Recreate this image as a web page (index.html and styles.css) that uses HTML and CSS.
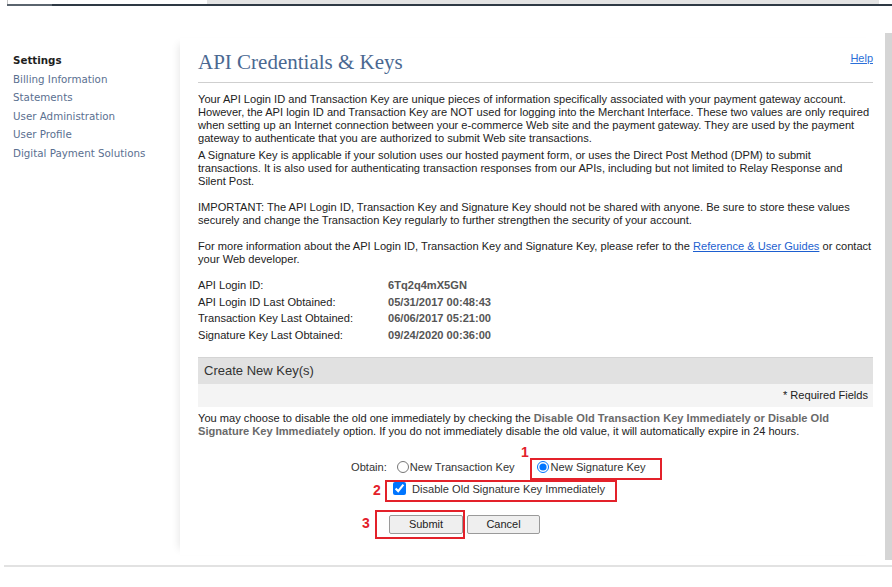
FILE: index.html
```html
<!DOCTYPE html>
<html lang="en">
<head>
<meta charset="utf-8">
<title>API Credentials &amp; Keys</title>
<link rel="stylesheet" href="styles.css">
</head>
<body>
<div class="topbar">
  <div class="topbar-top"><div class="tb-white"></div><div class="tb-grey"></div></div>
  <div class="topbar-line"></div>
</div>
<div class="layout">
  <nav class="sidebar">
    <div class="side-title">Settings</div>
    <a class="side-link" href="#">Billing Information</a>
    <a class="side-link" href="#">Statements</a>
    <a class="side-link" href="#">User Administration</a>
    <a class="side-link" href="#">User Profile</a>
    <a class="side-link" href="#">Digital Payment Solutions</a>
  </nav>
  <main class="panel">
    <div class="head">
      <h1 class="title">API Credentials &amp; Keys</h1>
      <a class="help" href="#">Help</a>
    </div>
    <p class="p1">Your API Login ID and Transaction Key are unique pieces of information specifically associated with your payment gateway account. However, the API login ID and Transaction Key are NOT used for logging into the Merchant Interface. These two values are only required when setting up an Internet connection between your e-commerce Web site and the payment gateway. They are used by the payment gateway to authenticate that you are authorized to submit Web site transactions.</p>
    <p class="p2">A Signature Key is applicable if your solution uses our hosted payment form, or uses the Direct Post Method (DPM) to submit transactions. It is also used for authenticating transaction responses from our APIs, including but not limited to Relay Response and Silent Post.</p>
    <p class="p3">IMPORTANT: The API Login ID, Transaction Key and Signature Key should not be shared with anyone. Be sure to store these values securely and change the Transaction Key regularly to further strengthen the security of your account.</p>
    <p class="p3">For more information about the API Login ID, Transaction Key and Signature Key, please refer to the <a class="link" href="#">Reference &amp; User Guides</a> or contact your Web developer.</p>
    <div class="keys">
      <div class="k">API Login ID:</div><div class="v">6Tq2q4mX5GN</div>
      <div class="k">API Login ID Last Obtained:</div><div class="v">05/31/2017 00:48:43</div>
      <div class="k">Transaction Key Last Obtained:</div><div class="v">06/06/2017 05:21:00</div>
      <div class="k">Signature Key Last Obtained:</div><div class="v">09/24/2020 00:36:00</div>
    </div>
    <div class="create-bar">Create New Key(s)</div>
    <div class="required">* Required Fields</div>
    <p class="p4">You may choose to disable the old one immediately by checking the <span class="em">Disable Old Transaction Key Immediately or Disable Old Signature Key Immediately</span> option. If you do not immediately disable the old value, it will automatically expire in 24 hours.</p>
    <form class="form">
      <div class="obtain-row">
        <span class="obtain-label">Obtain:</span>
        <label class="opt opt1"><input type="radio" name="k">New Transaction Key</label>
        <label class="opt opt2"><input type="radio" name="k" checked>New Signature Key</label>
      </div>
      <div class="check-row">
        <label class="opt"><input type="checkbox" checked>Disable Old Signature Key Immediately</label>
      </div>
      <div class="btn-row">
        <button type="button" class="btn btn-submit">Submit</button>
        <button type="button" class="btn btn-cancel">Cancel</button>
      </div>
      <div class="mark box1"></div>
      <div class="num n1">1</div>
      <div class="mark box2"></div>
      <div class="num n2">2</div>
      <div class="mark box3"></div>
      <div class="num n3">3</div>
    </form>
  </main>
  <div class="scroll"></div>
</div>
<div class="footer-line"></div>
</body>
</html>
```

FILE: styles.css
```css
html, body {
  margin: 0;
  padding: 0;
  background: #fff;
}
body {
  width: 892px;
  height: 587px;
  overflow: hidden;
  font-family: "Liberation Sans", Arial, sans-serif;
  font-size: 11.1px;
  color: #222;
}

/* top bar */
.topbar {
  display: flex;
  flex-direction: column;
  height: 6px;
}
.topbar-top {
  display: flex;
  height: 4px;
  margin-left: 7px;
  border-left: 1px solid #c4c4c4;
}
.tb-white { width: 199px; }
.tb-grey { width: 672px; background: #e3e3e3; }
.topbar-line {
  height: 2px;
  margin-left: 7px;
  background: linear-gradient(to right, #5a646e 0, #5a646e 45px, #2e3944 45px);
}

/* layout */
.layout {
  display: flex;
  margin-top: 27px;
  height: 527px;
}
.sidebar {
  width: 180px;
  flex: none;
  box-sizing: border-box;
  padding: 18px 0 0 13px;
  display: flex;
  flex-direction: column;
  font-family: "DejaVu Sans", Verdana, sans-serif;
  font-size: 10.3px;
  line-height: 18.5px;
}
.side-title {
  font-weight: bold;
  color: #1e1e1e;
}
.side-link {
  color: #5a6f90;
  text-decoration: none;
}

.panel {
  width: 700px;
  flex: none;
  height: 517px;
  margin-top: 5px;
  box-sizing: border-box;
  padding: 12px 7px 0 18px;
  box-shadow: -7px 0 8px -6px rgba(0, 0, 0, 0.10);
}
.scroll {
  width: 7px;
  margin-left: 5px;
  height: 527px;
  background: #d5d5d5;
}

.head {
  display: flex;
  justify-content: space-between;
  align-items: flex-start;
  height: 24px;
  padding-bottom: 8px;
  border-bottom: 1px solid #cfcfcf;
}
.title {
  margin: 0;
  font-family: "Liberation Serif", "Times New Roman", serif;
  font-weight: normal;
  font-size: 21px;
  line-height: 24px;
  color: #4a6891;
}
.help {
  margin-top: 2px;
  color: #2b6fd8;
  font-size: 11px;
  line-height: 12px;
}

p { margin: 0; line-height: 13px; }
.p1 { margin-top: 10px; }
.p2 { margin-top: 4px; }
.p3 { margin-top: 13px; }
.link { color: #1d5fd0; }

.keys {
  margin-top: 11px;
  display: grid;
  grid-template-columns: 190px 1fr;
  line-height: 16.5px;
}
.v {
  font-weight: bold;
  color: #555;
}

.create-bar {
  margin-top: 14px;
  height: 27px;
  box-sizing: border-box;
  border-top: 1px solid #d4d4d4;
  background: #e1e1e1;
  padding-left: 6px;
  font-size: 13px;
  line-height: 26px;
  color: #333;
}
.required {
  height: 23px;
  background: #f4f4f4;
  text-align: right;
  padding-right: 5px;
  line-height: 23px;
}
.p4 { margin-top: 4.5px; }
.em { color: #6a6a6a; font-weight: bold; }

/* form */
.form {
  position: relative;
  margin-top: 18px;
}
.obtain-row {
  display: flex;
  align-items: center;
  height: 22px;
  padding-left: 153px;
  color: #333;
}
.opt {
  display: inline-flex;
  align-items: center;
}
.opt input {
  margin: 0;
}
.opt1 input[type="radio"] {
  width: 12px;
  height: 12px;
  margin: 0 1px 0 10px;
}
.opt2 input[type="radio"] {
  width: 12px;
  height: 12px;
  margin: 0 2px 0 22px;
}
.check-row {
  display: flex;
  align-items: center;
  height: 22px;
  padding-left: 195px;
  color: #333;
}
.check-row input[type="checkbox"] {
  width: 13px;
  height: 13px;
  margin: 0 6px 0 0;
}
.btn-row {
  display: flex;
  margin-top: 15px;
  padding-left: 191px;
  gap: 4px;
}
.btn {
  height: 19px;
  box-sizing: border-box;
  padding: 0;
  border: 1px solid #9a9a9a;
  border-radius: 2px;
  background: #efefef;
  font-family: "Liberation Sans", Arial, sans-serif;
  font-size: 11px;
  color: #222;
}
.btn-submit { width: 74px; }
.btn-cancel { width: 73px; }

/* annotations */
.mark {
  position: absolute;
  box-sizing: border-box;
  border: 2px solid #e3212a;
}
.box1 { left: 332px; top: 2px; width: 132px; height: 22px; }
.box2 { left: 187px; top: 24px; width: 232px; height: 22px; }
.box3 { left: 177px; top: 54px; width: 90px; height: 29px; }
.num {
  position: absolute;
  color: #e3212a;
  font-weight: bold;
  font-size: 14px;
  line-height: 14px;
}
.n1 { left: 323px; top: -11px; }
.n2 { left: 175px; top: 27px; }
.n3 { left: 164px; top: 60px; }

.footer-line {
  margin-top: 5px;
  margin-left: 4px;
  height: 2px;
  background: #e2e2e2;
}
```
